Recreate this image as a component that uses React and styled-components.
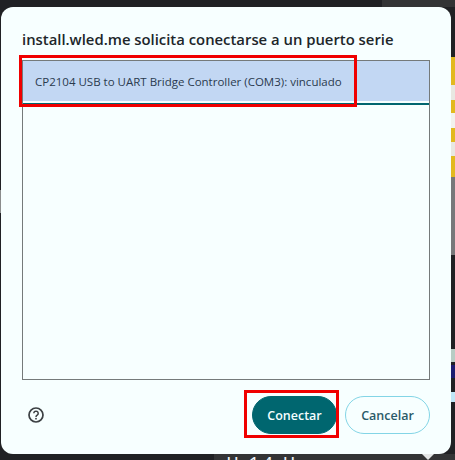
import styled, { createGlobalStyle } from "styled-components";

const DARK = "#202124";
const RIGHT_SEGMENTS = [
  { color: DARK, height: 50 },
  { color: "#e2b91f", height: 28 },
  { color: "#e8e8e2", height: 15 },
  { color: "#e2b91f", height: 13 },
  { color: "#f2f2ee", height: 15 },
  { color: "#e2b91f", height: 14 },
  { color: "#e8e8e2", height: 14 },
  { color: "#e2b91f", height: 21 },
  { color: "#77787a", height: 78 },
  { color: DARK, height: 94 },
  { color: "#b8ccc4", height: 13 },
  { color: DARK, height: 3 },
  { color: "#1c1c70", height: 13 },
  { color: DARK, height: 14 },
  { color: "#bfe6f7", height: 10 },
  { color: DARK, height: 52 },
];

const LEFT_SEGMENTS = [
  { color: DARK, height: 183 },
  { color: "#8a8c8c", height: 23 },
  { color: DARK, height: 241 },
];

const GlobalStyle = createGlobalStyle`
  html, body {
    margin: 0;
    padding: 0;
    background: ${DARK};
  }
`;

const Page = styled.div`
  position: relative;
  width: 455px;
  height: 460px;
  overflow: hidden;
  display: flex;
  flex-direction: column;
  font-family: "Open Sans", "Noto Sans", sans-serif;
`;

const TopStrip = styled.div`
  height: 7px;
  background: linear-gradient(90deg, ${DARK} 0 382px, #333435 382px);
`;

const Middle = styled.div`
  height: 447px;
  display: grid;
  grid-template-columns: 1px 1fr 4px;
`;

const SideStrip = styled.div`
  display: flex;
  flex-direction: column;
`;

const StripSegment = styled.div`
  height: ${({ $height }) => $height}px;
  background: ${({ $color }) => $color};
`;

const BottomStrip = styled.div`
  height: 6px;
  overflow: hidden;
  display: flex;
  background: linear-gradient(90deg, ${DARK} 0 214px, #333435 214px);
`;

const ClippedClock = styled.span`
  margin-left: 226px;
  font-size: 20px;
  line-height: 20px;
  letter-spacing: 2px;
  color: #eef4f8;
`;

const Pointer = styled.span`
  margin-left: 124px;
  border-left: 6px solid transparent;
  border-right: 6px solid transparent;
  border-top: 6px solid #e4e6e6;
`;

const Dialog = styled.div`
  box-sizing: border-box;
  display: flex;
  flex-direction: column;
  padding: 22px 21px 20px 21px;
  background: #f7ffff;
  border-radius: 12px;
`;

const Title = styled.h1`
  margin: 0 0 11px 0;
  font-size: 14.85px;
  line-height: 20px;
  font-weight: 600;
  color: #20262a;
`;

const DeviceList = styled.div`
  flex: 1;
  border: 1px solid #757a7a;
  min-height: 0;
`;

const DeviceRow = styled.div`
  box-sizing: border-box;
  height: 44px;
  display: flex;
  align-items: center;
  padding: 0 0 4px 12px;
  background: linear-gradient(#c2d7f3 0 40px, #f7ffff 40px 42px, #00666f 42px);
  font-size: 11.5px;
  color: #2a3a4e;
`;

const Footer = styled.div`
  display: flex;
  align-items: center;
  justify-content: space-between;
  margin-top: 16px;
`;

const HelpIcon = styled.svg`
  width: 18px;
  height: 18px;
  margin-left: 5px;
`;

const Buttons = styled.div`
  display: flex;
  gap: 8px;
`;

const Button = styled.button`
  box-sizing: border-box;
  width: 85px;
  height: 38px;
  border-radius: 19px;
  border: 1px solid ${({ $primary }) => ($primary ? "#00666f" : "#83d5e6")};
  background: ${({ $primary }) => ($primary ? "#00666f" : "transparent")};
  color: ${({ $primary }) => ($primary ? "#f4ffff" : "#2a5a68")};
  font-family: inherit;
  font-size: 12.5px;
  font-weight: 600;
  padding: 0;
`;

const Highlight = styled.div`
  position: absolute;
  box-sizing: border-box;
  border: 3px solid #f00000;
  top: ${({ $top }) => $top}px;
  left: ${({ $left }) => $left}px;
  width: ${({ $width }) => $width}px;
  height: ${({ $height }) => $height}px;
`;

const App = () => (
  <Page>
    <GlobalStyle />
    <TopStrip />
    <Middle>
      <SideStrip>
        {LEFT_SEGMENTS.map((segment, i) => (
          <StripSegment key={i} $color={segment.color} $height={segment.height} />
        ))}
      </SideStrip>
      <Dialog>
        <Title>install.wled.me solicita conectarse a un puerto serie</Title>
        <DeviceList>
          <DeviceRow>CP2104 USB to UART Bridge Controller (COM3): vinculado</DeviceRow>
        </DeviceList>
        <Footer>
          <HelpIcon viewBox="0 0 18 18" fill="none">
            <circle cx="9" cy="9" r="7" stroke="#3c4043" strokeWidth="1.7" />
            <path
              d="M6.8 7.3a2.2 2.2 0 1 1 3.4 1.9c-.8.5-1.2.9-1.2 1.7"
              stroke="#3c4043"
              strokeWidth="1.5"
            />
            <circle cx="9" cy="12.7" r="0.9" fill="#3c4043" />
          </HelpIcon>
          <Buttons>
            <Button $primary>Conectar</Button>
            <Button>Cancelar</Button>
          </Buttons>
        </Footer>
      </Dialog>
      <SideStrip>
        {RIGHT_SEGMENTS.map((segment, i) => (
          <StripSegment key={i} $color={segment.color} $height={segment.height} />
        ))}
      </SideStrip>
    </Middle>
    <BottomStrip>
      <ClippedClock>II 14 II</ClippedClock>
      <Pointer />
    </BottomStrip>
    <Highlight $top={55} $left={19} $width={338} $height={52} />
    <Highlight $top={390} $left={244} $width={95} $height={48} />
  </Page>
);

export default App;
